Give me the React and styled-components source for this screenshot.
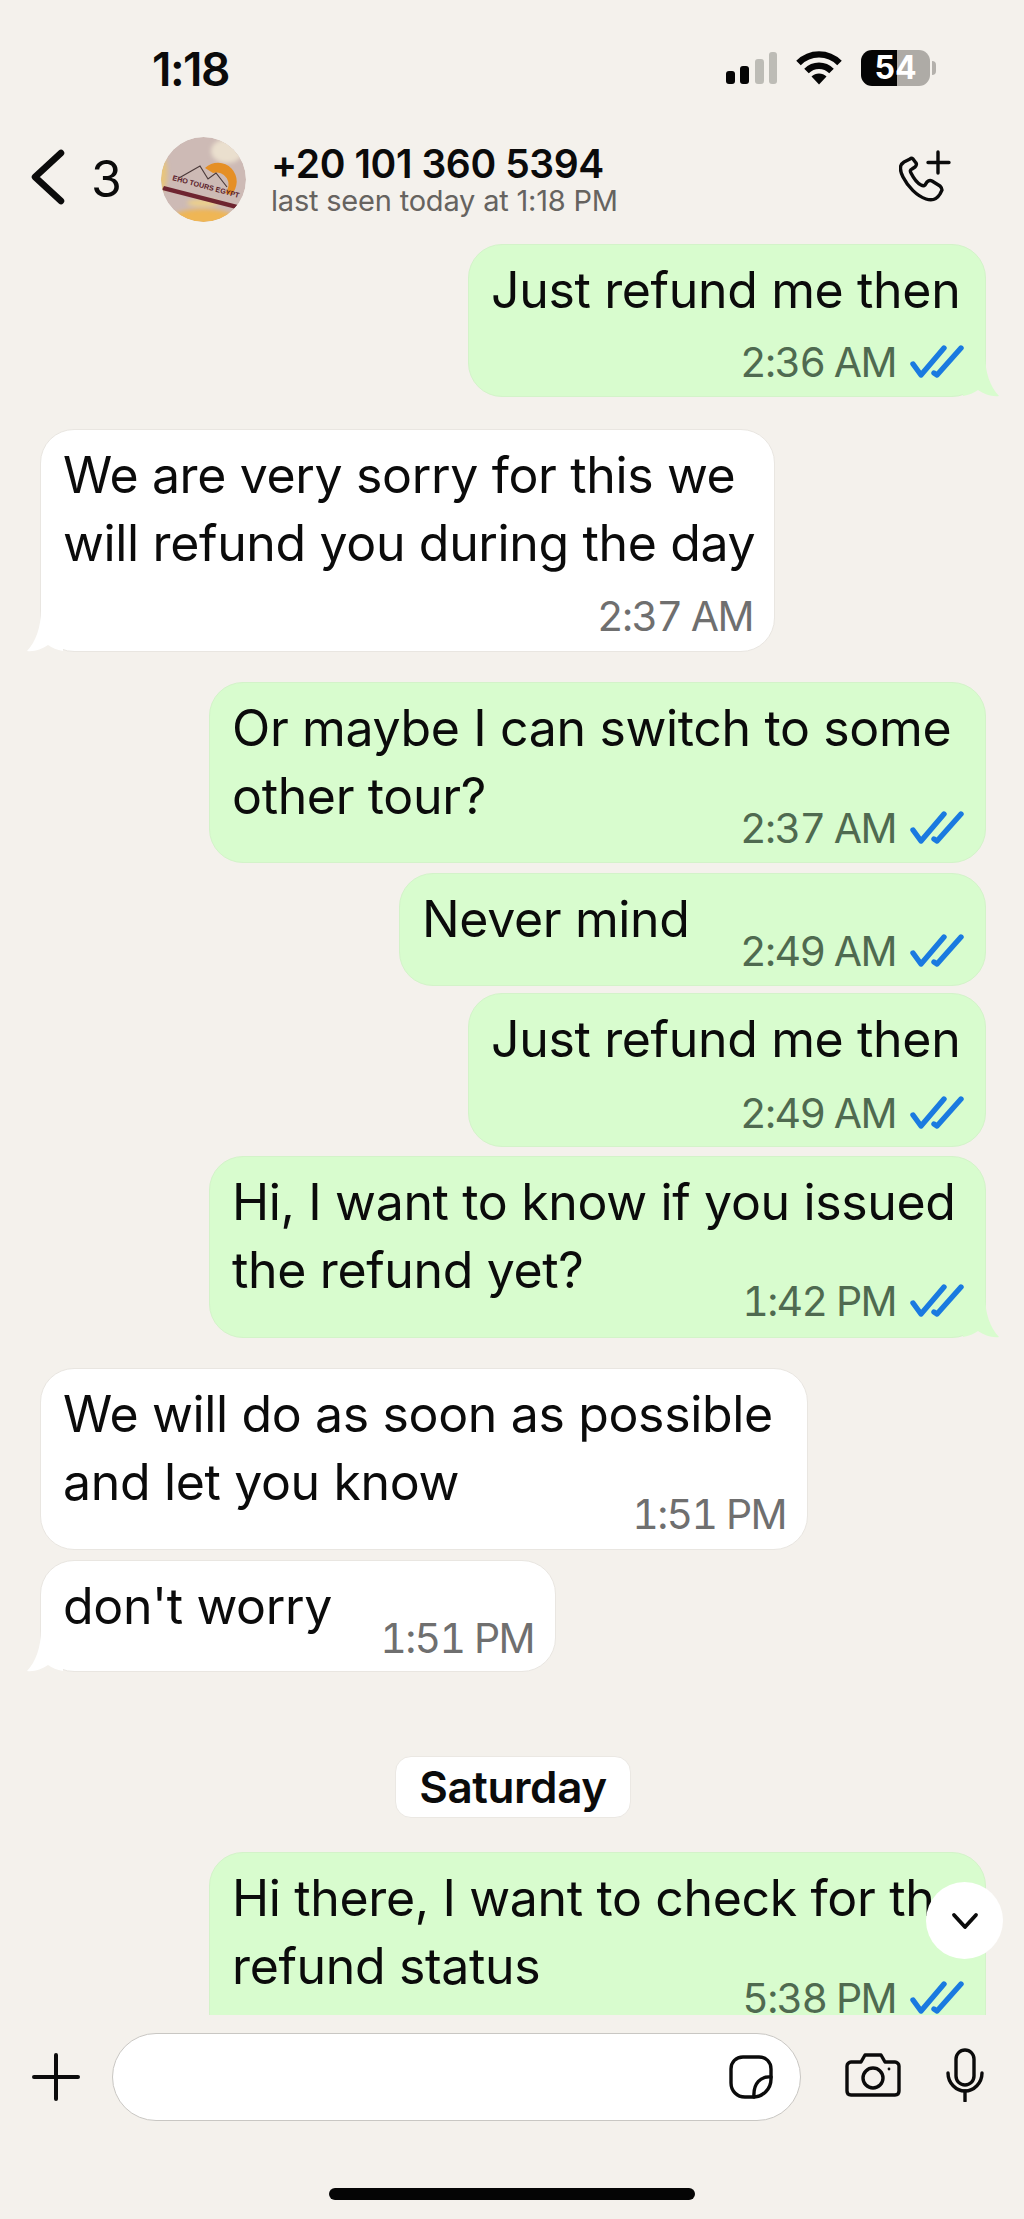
import React from 'react';
import styled, { createGlobalStyle } from 'styled-components';

const GlobalStyle = createGlobalStyle`
  html, body {
    margin: 0;
    padding: 0;
    background: #f4f1ec;
  }
  body {
    font-family: Inter, "Liberation Sans", sans-serif;
    color: #0b0b0b;
  }
`;

const Phone = styled.div`
  width: 1024px;
  height: 2219px;
  display: flex;
  flex-direction: column;
  position: relative;
  overflow: hidden;
  background: #f4f1ec;
`;

const StatusBar = styled.div`
  height: 100px;
  flex: none;
  display: flex;
  align-items: flex-start;
  justify-content: space-between;
  padding: 44px 94px 0 152px;
  box-sizing: border-box;
`;

const Clock = styled.div`
  font-size: 46px;
  line-height: 50px;
  font-weight: 600;
  letter-spacing: -1.5px;
`;

const StatusIcons = styled.div`
  display: flex;
  align-items: center;
  gap: 19px;
  margin-top: 6px;
`;

const Battery = styled.div`
  width: 69px;
  height: 36px;
  border-radius: 11px;
  background: linear-gradient(90deg, #050505 0 52%, #aeaba6 52% 100%);
  color: #fff;
  font-size: 32px;
  line-height: 36px;
  font-weight: 700;
  text-align: center;
  position: relative;

  &::after {
    content: '';
    position: absolute;
    right: -6px;
    top: 11px;
    width: 4px;
    height: 14px;
    border-radius: 0 4px 4px 0;
    background: #b4b1ac;
  }
`;

const Header = styled.div`
  height: 131px;
  flex: none;
  display: flex;
  align-items: flex-start;
  padding-top: 37px;
  box-sizing: border-box;
`;

const BackIcon = styled.svg`
  margin-left: 31px;
  margin-top: 12px;
  flex: none;
`;

const BackCount = styled.div`
  width: 69px;
  margin-left: 26px;
  margin-top: 14px;
  font-size: 50px;
  line-height: 56px;
`;

const Avatar = styled.svg`
  flex: none;
  margin-left: 1px;
  border-radius: 50%;
`;

const Contact = styled.div`
  margin-left: 25px;
  flex: 1;
`;

const ContactName = styled.div`
  font-size: 39px;
  line-height: 46px;
  font-weight: 600;
  letter-spacing: -0.4px;
  margin-top: 4px;
`;

const LastSeen = styled.div`
  font-size: 29px;
  line-height: 34px;
  color: #66635f;
  letter-spacing: -0.2px;
  margin-top: -3px;
`;

const CallIcon = styled.svg`
  flex: none;
  margin: 13px 71px 0 0;
`;

const Chat = styled.div`
  flex: 1;
  min-height: 0;
  overflow: hidden;
  display: flex;
  flex-direction: column;
  align-items: flex-start;
  padding: 2px 38px 0 40px;
`;

const PrevEdge = styled.div`
  align-self: flex-end;
  width: 540px;
  height: 3px;
  margin-right: 21px;
  background: #e3efd8;
  border-radius: 0 0 8px 8px;
`;

const Bubble = styled.div`
  flex: none;
  position: relative;
  box-sizing: border-box;
  width: ${p => p.$width}px;
  margin-top: ${p => p.$gap}px;
  padding: 11px 21px 0 22px;
  height: ${p => p.$height}px;
  border-radius: 34px;
  background: ${p => (p.$out ? '#d8fcce' : '#ffffff')};
  border: 1px solid ${p => (p.$out ? '#d3f3c9' : '#e9e6e1')};
  align-self: ${p => (p.$out ? 'flex-end' : 'flex-start')};
`;

const Text = styled.div`
  font-size: 50px;
  line-height: 68px;
  letter-spacing: -0.35px;
  white-space: nowrap;
`;

const Meta = styled.div`
  display: flex;
  justify-content: flex-end;
  align-items: center;
  gap: 13px;
  height: 36px;
  margin-top: ${p => p.$top}px;
  font-size: 41px;
  line-height: 36px;
  letter-spacing: -1.6px;
  font-variant-numeric: tabular-nums;
  color: ${p => (p.$out ? '#4f6a50' : '#6f6f6f')};
  white-space: nowrap;
`;

const Ticks = styled.svg`
  flex: none;
`;

const Tail = styled.svg`
  position: absolute;
  bottom: -1px;
  ${p => (p.$out ? 'right: -14px;' : 'left: -14px;')}
`;

const DayChip = styled.div`
  flex: none;
  align-self: center;
  width: 236px;
  height: 62px;
  margin-top: 84px;
  box-sizing: border-box;
  border: 1px solid #ebe8e3;
  border-radius: 16px;
  background: #fff;
  font-size: 44px;
  line-height: 60px;
  font-weight: 600;
  letter-spacing: -0.4px;
  text-align: center;
`;

const ScrollButton = styled.div`
  position: absolute;
  left: 926px;
  top: 1882px;
  width: 77px;
  height: 77px;
  border-radius: 50%;
  background: #fff;
  display: flex;
  align-items: center;
  justify-content: center;
`;

const Composer = styled.div`
  height: 204px;
  flex: none;
  position: relative;
  display: flex;
  align-items: flex-start;
  padding-top: 18px;
  box-sizing: border-box;
`;

const PlusIcon = styled.svg`
  flex: none;
  margin: 20px 32px 0 32px;
`;

const InputBox = styled.div`
  width: 689px;
  height: 88px;
  box-sizing: border-box;
  flex: none;
  border-radius: 45px;
  border: 1.5px solid #c9c7c3;
  background: #fff;
  display: flex;
  align-items: center;
  justify-content: flex-end;
  padding-right: 27px;
`;

const CameraIcon = styled.svg`
  flex: none;
  margin: 20px 0 0 44px;
`;

const MicIcon = styled.svg`
  flex: none;
  margin: 15px 0 0 45px;
`;

const HomeBar = styled.div`
  position: absolute;
  left: 329px;
  bottom: 19px;
  width: 366px;
  height: 12px;
  border-radius: 6px;
  background: #050505;
`;

const messages = [
  { out: true, width: 518, height: 153, gap: 11, lines: ['Just refund me then'], time: '2:36 AM', top: 20, tail: true },
  { out: false, width: 735, height: 223, gap: 32, lines: ['We are very sorry for this we', 'will refund you during the day'], time: '2:37 AM', top: 21, tail: true },
  { out: true, width: 777, height: 181, gap: 30, lines: ['Or maybe I can switch to some', 'other tour?'], time: '2:37 AM', top: -20 },
  { out: true, width: 587, height: 113, gap: 10, lines: ['Never mind'], time: '2:49 AM', top: -20 },
  { out: true, width: 518, height: 154, gap: 7, lines: ['Just refund me then'], time: '2:49 AM', top: 22 },
  { out: true, width: 777, height: 182, gap: 9, lines: ['Hi, I want to know if you issued', 'the refund yet?'], time: '1:42 PM', top: -21, tail: true },
  { out: false, width: 768, height: 182, gap: 30, lines: ['We will do as soon as possible', 'and let you know'], time: '1:51 PM', top: -20 },
  { out: false, width: 516, height: 112, gap: 10, lines: ["don't worry"], time: '1:51 PM', top: -20, tail: true }
];

const lastMessage = {
  out: true,
  width: 777,
  height: 200,
  gap: 34,
  lines: ['Hi there, I want to check for the', 'refund status'],
  time: '5:38 PM',
  top: -20
};

const Message = ({ item }) => (
  <Bubble $out={item.out} $width={item.width} $height={item.height} $gap={item.gap}>
    <Text>
      {item.lines.map(line => <div key={line}>{line}</div>)}
    </Text>
    <Meta $out={item.out} $top={item.top}>
      {item.time}
      {item.out &&
        <Ticks width="55" height="36" viewBox="0 0 55 36" fill="none" stroke="#1a7ae0" strokeWidth="5.4" strokeLinecap="round" strokeLinejoin="round">
          <path d="M4 20 L12 31 L35 4" />
          <path d="M25 29 L28 31 L52 4" />
        </Ticks>}
    </Meta>
    {item.tail &&
      <Tail $out={item.out} width="36" height="42" viewBox="0 0 36 42">
        {item.out
          ? <path d="M22 0 C22 16 27 32 36 41 C29 42 21 39 15 35 C11 38 6 40 0 41 L0 0 Z" fill="#d8fcce" />
          : <path d="M14 0 C14 16 9 32 0 41 C7 42 15 39 21 35 C25 38 30 40 36 41 L36 0 Z" fill="#ffffff" />}
      </Tail>}
  </Bubble>
);

const App = () => {
  return (
    <Phone>
      <GlobalStyle />
      <StatusBar>
        <Clock>1:18</Clock>
        <StatusIcons>
          <svg width="51" height="32" viewBox="0 0 51 32">
            <rect x="0" y="19" width="9" height="13" rx="3" fill="#050505" />
            <rect x="14" y="14" width="9" height="18" rx="3" fill="#050505" />
            <rect x="29" y="7" width="9" height="25" rx="3" fill="#bdbcb6" />
            <rect x="43" y="0" width="8" height="32" rx="3" fill="#bdbcb6" />
          </svg>
          <svg width="46" height="34" viewBox="0 0 46 34" fill="none" stroke="#050505" strokeWidth="6.4">
            <path d="M2.5 12 C14 0.5 32 0.5 43.5 12" />
            <path d="M10.5 20 C17.5 13 28.5 13 35.5 20" />
            <path d="M23 33.5 L15.5 25.5 C19.5 21.5 26.5 21.5 30.5 25.5 Z" fill="#050505" stroke="none" />
          </svg>
          <Battery>54</Battery>
        </StatusIcons>
      </StatusBar>

      <Header>
        <BackIcon width="34" height="56" viewBox="0 0 34 56" fill="none" stroke="#0b0b0b" strokeWidth="6.5" strokeLinecap="round" strokeLinejoin="round">
          <path d="M30 4 L4 28 L30 52" />
        </BackIcon>
        <BackCount>3</BackCount>
        <Avatar width="85" height="85" viewBox="0 0 85 85">
          <defs>
            <clipPath id="avatarClip"><circle cx="42.5" cy="42.5" r="42.5" /></clipPath>
            <filter id="avatarBlur"><feGaussianBlur stdDeviation="2.2" /></filter>
          </defs>
          <g clipPath="url(#avatarClip)">
            <rect width="85" height="85" fill="#cdbab5" />
            <g filter="url(#avatarBlur)">
              <ellipse cx="66" cy="14" rx="16" ry="12" fill="#eadfce" />
              <ellipse cx="1" cy="36" rx="5" ry="18" fill="#e8c57c" />
              <ellipse cx="42" cy="86" rx="36" ry="14" fill="#efb654" />
              <ellipse cx="42" cy="66" rx="16" ry="3.5" fill="#edd08a" />
            </g>
            <path d="M44 31 A18 18 0 0 1 70 58 L64 56 A12 12 0 0 0 52 36 Z" fill="#e58f25" />
            <path d="M18 41 L39 29 L47 42 L55 36 L66 50" fill="none" stroke="#4b3a3a" strokeWidth="1.2" />
            <path d="M3 49 L77 68 L75 72 L1 53 Z" fill="#6e2430" />
            <text x="11" y="43" fontFamily="Liberation Sans, sans-serif" fontSize="7.2" fontWeight="700" fill="#5a2029" transform="rotate(15 11 43)">EHO TOURS EGYPT</text>
          </g>
        </Avatar>
        <Contact>
          <ContactName>+20 101 360 5394</ContactName>
          <LastSeen>last seen today at 1:18 PM</LastSeen>
        </Contact>
        <CallIcon width="54" height="52" viewBox="0 0 54 52" fill="none" stroke="#0b0b0b" strokeWidth="3.4" strokeLinecap="round" strokeLinejoin="round">
          <path d="M11 9 L5 12 C0 15 1 21 4 27 C9 37 18 46 27 49 C33 51 38 49 41 44 L43 40 C43 38 42 37 41 36 L33 31 C31 30 30 30 28 32 L26 35 C25 36 24 36 22 35 C18 33 14 27 12 23 C11 21 11 20 13 19 L16 17 C17 16 18 14 17 13 L14 9 C13 8 12 8 11 9 Z" />
          <path d="M39 2 V23 M29 12.5 H50" />
        </CallIcon>
      </Header>

      <Chat>
        <PrevEdge />
        {messages.map(item => <Message item={item} key={item.time + item.lines[0]} />)}
        <DayChip>Saturday</DayChip>
        <Message item={lastMessage} />
      </Chat>

      <ScrollButton>
        <svg width="28" height="18" viewBox="0 0 28 18" fill="none" stroke="#0b0b0b" strokeWidth="3.8" strokeLinecap="round" strokeLinejoin="round">
          <path d="M3 3 L14 15 L25 3" />
        </svg>
      </ScrollButton>

      <Composer>
        <PlusIcon width="48" height="48" viewBox="0 0 48 48" stroke="#0b0b0b" strokeWidth="4" strokeLinecap="round">
          <path d="M24 2 V46 M2 24 H46" />
        </PlusIcon>
        <InputBox>
          <svg width="44" height="44" viewBox="0 0 44 44" fill="none" stroke="#0b0b0b" strokeWidth="3.4" strokeLinejoin="round" strokeLinecap="round">
            <path d="M14 2 H30 C37 2 42 7 42 14 V24 C42 34 34 42 24 42 H16 C8 42 2 36 2 28 V14 C2 7 7 2 14 2 Z" />
            <path d="M42 22 C32 21 24 28 25 42" />
          </svg>
        </InputBox>
        <CameraIcon width="56" height="44" viewBox="0 0 56 44" fill="none" stroke="#0b0b0b" strokeWidth="3.4" strokeLinejoin="round">
          <path d="M6 9 H16 L20 2 H36 L40 9 H50 C52 9 54 11 54 13 V38 C54 41 52 42 50 42 H6 C4 42 2 41 2 38 V13 C2 11 4 9 6 9 Z" />
          <circle cx="28" cy="25" r="10" />
          <circle cx="44" cy="16" r="1.4" fill="#0b0b0b" stroke="none" />
        </CameraIcon>
        <MicIcon width="38" height="54" viewBox="0 0 38 54" fill="none" stroke="#0b0b0b" strokeWidth="3.4" strokeLinecap="round">
          <rect x="10" y="2" width="18" height="35" rx="9" />
          <path d="M2 25 C2 35 10 43 19 43 C28 43 36 35 36 25" />
          <path d="M19 43 V53" />
        </MicIcon>
        <HomeBar />
      </Composer>
    </Phone>
  );
};

export default App;
